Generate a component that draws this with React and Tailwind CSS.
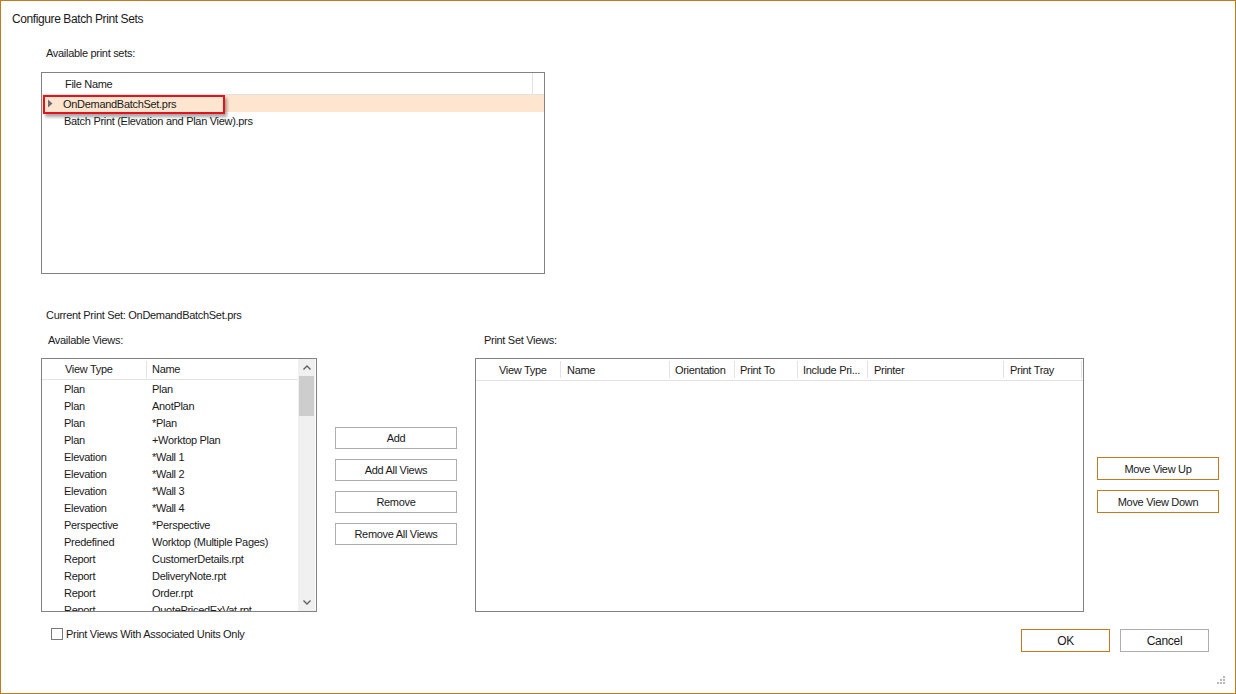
// App.jsx — Configure Batch Print Sets dialog
import React from 'react';

const views = [
  ['Plan', 'Plan'],
  ['Plan', 'AnotPlan'],
  ['Plan', '*Plan'],
  ['Plan', '+Worktop Plan'],
  ['Elevation', '*Wall 1'],
  ['Elevation', '*Wall 2'],
  ['Elevation', '*Wall 3'],
  ['Elevation', '*Wall 4'],
  ['Perspective', '*Perspective'],
  ['Predefined', 'Worktop (Multiple Pages)'],
  ['Report', 'CustomerDetails.rpt'],
  ['Report', 'DeliveryNote.rpt'],
  ['Report', 'Order.rpt'],
  ['Report', 'QuotePricedExVat.rpt'],
];

const setColumns = [
  { label: 'View Type', w: 'w-[85px]', pad: 'pl-[23px]' },
  { label: 'Name', w: 'w-[109px]', pad: 'pl-[6px]' },
  { label: 'Orientation', w: 'w-[65px]', pad: 'pl-[5px]' },
  { label: 'Print To', w: 'w-[63px]', pad: 'pl-[5px]' },
  { label: 'Include Pri...', w: 'w-[70px]', pad: 'pl-[5px]' },
  { label: 'Printer', w: 'w-[136px]', pad: 'pl-[6px]' },
  { label: 'Print Tray', w: 'w-[78px]', pad: 'pl-[6px]' },
];

function Button({ children, accent, className = '' }) {
  return (
    <div
      className={`flex items-center justify-center bg-white border ${
        accent ? 'border-[#c27a1f]' : 'border-[#adadad]'
      } ${className}`}
    >
      {children}
    </div>
  );
}

function Chevron({ down }) {
  return (
    <svg width="8" height="5" viewBox="0 0 8 5">
      <path
        d={down ? 'M0.5 0.5 L4 4 L7.5 0.5' : 'M0.5 4.5 L4 1 L7.5 4.5'}
        fill="none"
        stroke="#606060"
        strokeWidth="1.4"
      />
    </svg>
  );
}

export default function App() {
  return (
    <div className="w-[1236px] h-[694px] bg-white border border-[#c27a1f] relative flex flex-col overflow-hidden font-['Liberation_Sans',Arial,sans-serif] text-[11px] tracking-[-0.3px] text-[#1a1a1a] leading-[14px]">
      {/* Title */}
      <div className="pl-[11px] pt-[11px] text-[12px] tracking-[-0.4px] h-[25px]">Configure Batch Print Sets</div>

      <div className="pl-[45px] mt-[20px] h-[14px]">Available print sets:</div>

      {/* Print sets list */}
      <div className="ml-[40px] mt-[12px] w-[504px] h-[202px] border border-[#828282] relative shrink-0">
        <div className="h-[22px] flex items-center border-b border-[#e3e3e3]">
          <div className="w-[491px] h-full flex items-center pl-[23px] border-r border-[#e3e3e3]">File Name</div>
        </div>
        <div className="h-[17px] flex items-center bg-[#fde5cf] relative">
          <svg className="absolute left-[5px] top-[4px]" width="6" height="9" viewBox="0 0 6 9">
            <path d="M1 0.5 L5.5 4.5 L1 8.5 Z" fill="#6f6f6f" />
          </svg>
          <span className="pl-[21px]">OnDemandBatchSet.prs</span>
        </div>
        <div className="h-[17px] flex items-center pl-[22px]">Batch Print (Elevation and Plan View).prs</div>

        {/* highlight marker */}
        <div className="absolute left-[1px] top-[22px] w-[182px] h-[19px] border-2 border-[#e3121c] shadow-[2px_3px_3px_rgba(0,0,0,0.35)]" />
      </div>

      <div className="pl-[45px] mt-[34px] h-[14px]">Current Print Set: OnDemandBatchSet.prs</div>

      {/* Lower section */}
      <div className="flex mt-[11px] h-[280px]">
        {/* Available views */}
        <div className="ml-[40px] flex flex-col">
          <div className="pl-[7px] h-[14px]">Available Views:</div>
          <div className="mt-[11px] w-[276px] h-[254px] border border-[#828282] flex overflow-hidden">
            <div className="flex-1 flex flex-col">
              <div className="h-[21px] shrink-0 flex items-center border-b border-[#e3e3e3]">
                <div className="w-[105px] pl-[23px] h-[17px] flex items-center border-r border-[#e3e3e3]">View Type</div>
                <div className="pl-[5px]">Name</div>
              </div>
              {views.map(([type, name], i) => (
                <div key={i} className="h-[17px] shrink-0 flex items-center">
                  <div className="w-[105px] pl-[22px]">{type}</div>
                  <div className="pl-[5px] whitespace-nowrap">{name}</div>
                </div>
              ))}
            </div>
            <div className="w-[17px] mr-[1px] bg-[#f0f0f0] flex flex-col items-center">
              <div className="h-[17px] flex items-center justify-center">
                <Chevron />
              </div>
              <div className="w-[15px] h-[40px] bg-[#cdcdcd]" />
              <div className="flex-1" />
              <div className="h-[17px] flex items-center justify-center">
                <Chevron down />
              </div>
            </div>
          </div>
        </div>

        {/* Add / remove */}
        <div className="ml-[18px] pt-[94px] flex flex-col gap-[10px] w-[122px]">
          <Button className="h-[22px]">Add</Button>
          <Button className="h-[22px]">Add All Views</Button>
          <Button className="h-[22px]">Remove</Button>
          <Button className="h-[22px]">Remove All Views</Button>
        </div>

        {/* Print set views */}
        <div className="ml-[18px] flex flex-col">
          <div className="pl-[9px] h-[14px]">Print Set Views:</div>
          <div className="mt-[11px] w-[609px] h-[254px] border border-[#828282]">
            <div className="h-[22px] flex items-center border-b border-[#e3e3e3]">
              {setColumns.map((c) => (
                <div
                  key={c.label}
                  className={`${c.w} ${c.pad} h-[17px] flex items-center border-r border-[#e3e3e3] whitespace-nowrap`}
                >
                  {c.label}
                </div>
              ))}
            </div>
          </div>
        </div>

        {/* Move buttons */}
        <div className="ml-[13px] pt-[124px] flex flex-col gap-[10px] w-[122px]">
          <Button accent className="h-[23px]">Move View Up</Button>
          <Button accent className="h-[23px]">Move View Down</Button>
        </div>
      </div>

      {/* Bottom row */}
      <div className="flex items-start mt-[15px]">
        <div className="ml-[50px] w-[12px] h-[12px] border border-[#7a7a7a] bg-white" />
        <div className="ml-[3px] leading-[12px]">Print Views With Associated Units Only</div>
        <Button accent className="ml-auto mt-[1px] w-[89px] h-[23px] text-[12px]">OK</Button>
        <Button className="ml-[10px] mr-[26px] mt-[1px] w-[89px] h-[23px] text-[12px]">Cancel</Button>
      </div>

      {/* Resize grip */}
      <svg className="absolute right-[9px] bottom-[8px]" width="9" height="9" viewBox="0 0 9 9">
        {[[6, 0], [3, 3], [6, 3], [0, 6], [3, 6], [6, 6]].map(([x, y]) => (
          <rect key={`${x}-${y}`} x={x} y={y} width="2" height="2" fill="#b8b8b8" />
        ))}
      </svg>
    </div>
  );
}
